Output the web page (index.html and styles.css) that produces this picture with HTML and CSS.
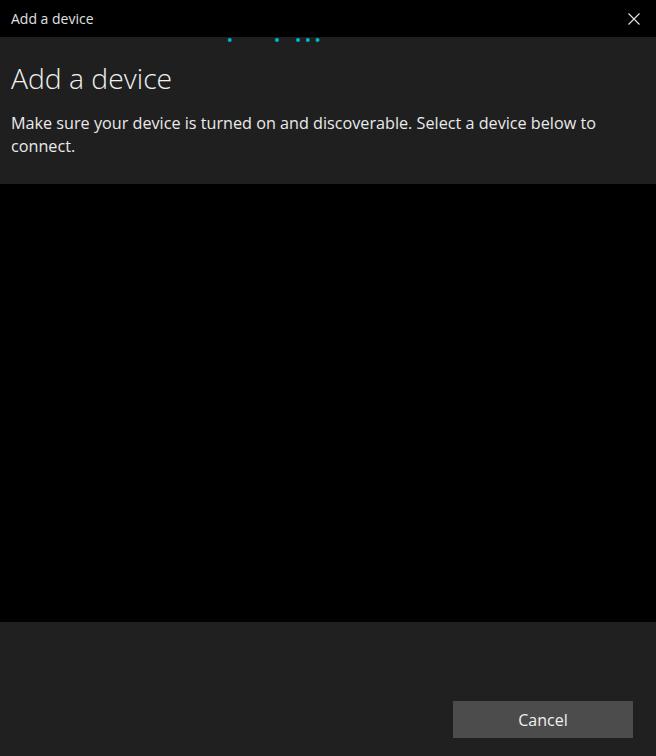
FILE: index.html
```html
<!DOCTYPE html>
<html>
<head>
<meta charset="utf-8">
<link rel="stylesheet" href="styles.css">
</head>
<body>
<div class="window">
  <div class="titlebar">
    <span class="title">Add a device</span>
    <svg class="close" width="12" height="12" viewBox="0 0 12 12"><path d="M0.5 0.5L11.5 11.5M11.5 0.5L0.5 11.5" stroke="#e6e6e6" stroke-width="1.1" fill="none"/></svg>
  </div>
  <div class="header">
    <svg class="dots" width="656" height="6" viewBox="0 0 656 6">
      <circle cx="229.7" cy="3" r="2" fill="#00b7c7"/>
      <circle cx="277" cy="3" r="2" fill="#00b7c7"/>
      <circle cx="298" cy="3" r="2" fill="#00b7c7"/>
      <circle cx="307.8" cy="3" r="2" fill="#00b7c7"/>
      <circle cx="317.5" cy="3" r="2" fill="#00b7c7"/>
    </svg>
    <h1 class="heading">Add a device</h1>
    <p class="desc">Make sure your device is turned on and discoverable. Select a device below to connect.</p>
  </div>
  <div class="list"></div>
  <div class="footer">
    <button class="cancel">Cancel</button>
  </div>
</div>
</body>
</html>
```
FILE: styles.css
```css
html, body {
  margin: 0;
  padding: 0;
  background: #000;
}
.window {
  width: 656px;
  height: 756px;
  display: flex;
  flex-direction: column;
  font-family: "Open Sans", "Noto Sans", sans-serif;
  color: #e8e8e8;
}
.titlebar {
  height: 37px;
  flex: none;
  background: #000;
  display: flex;
  align-items: center;
  justify-content: space-between;
  padding: 0 16px 0 11px;
}
.title {
  font-size: 14px;
  color: #e0e0e0;
}
.close {
  display: block;
}
.header {
  position: relative;
  height: 147px;
  flex: none;
  background: #1f1f1f;
  padding: 0 11px;
  box-sizing: border-box;
}
.dots {
  position: absolute;
  top: 0;
  left: 0;
  display: block;
}
.heading {
  margin: 0;
  padding-top: 22px;
  font-size: 28.3px;
  font-weight: 300;
  line-height: 38px;
  color: #f0f0f0;
}
.desc {
  margin: 15px 0 0;
  font-size: 16.2px;
  line-height: 23px;
  color: #eaeaea;
}
.list {
  flex: 1;
  background: #000;
}
.footer {
  height: 134px;
  flex: none;
  background: #202020;
  display: flex;
  justify-content: flex-end;
  align-items: flex-end;
  padding: 0 23px 18px 0;
  box-sizing: border-box;
}
.cancel {
  width: 180px;
  height: 37px;
  background: #4c4c4c;
  border: none;
  color: #f0f0f0;
  font-family: "Open Sans", "Noto Sans", sans-serif;
  font-size: 16px;
  padding: 0;
}
```
